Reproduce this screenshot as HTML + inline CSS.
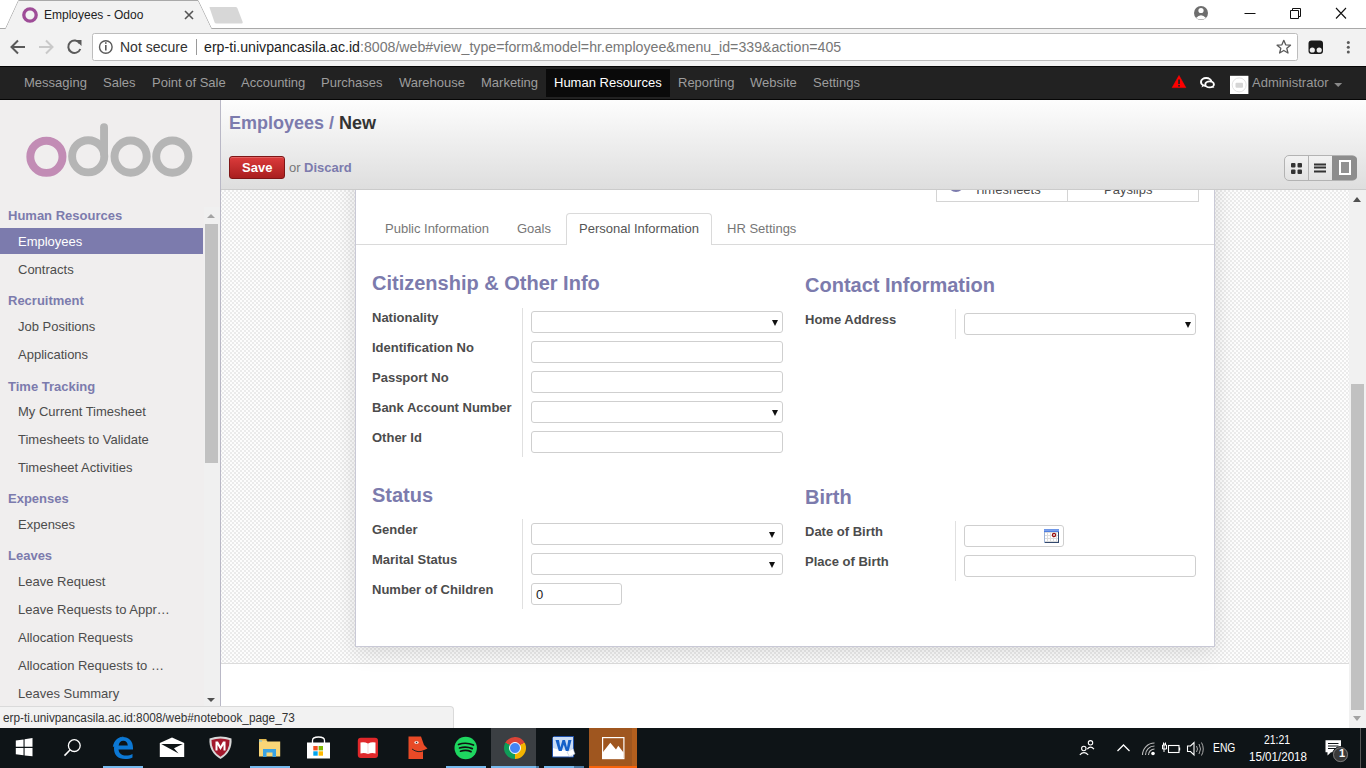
<!DOCTYPE html>
<html><head><meta charset="utf-8"><style>
*{margin:0;padding:0;box-sizing:border-box}
html,body{width:1366px;height:768px;overflow:hidden;background:#fff;font-family:"Liberation Sans",sans-serif;position:relative}
.a{position:absolute;white-space:nowrap}
.t{line-height:1}
</style></head><body>
<div class="a" style="left:0px;top:0px;width:1366px;height:66px;background:#fff"></div>
<svg class="a" style="left:0;top:0" width="1366" height="66">
<rect x="0" y="28" width="1366" height="38" fill="#f2f2f2"/>
<path d="M0 28.5 H5.7 L18.6 0.5 H198 L211.4 28.5 H1366" fill="none" stroke="#a9a9a9" stroke-width="1"/>
<path d="M5.7 29 L18.6 1 H198 L211.4 29 Z" fill="#f2f2f2"/>
<path d="M209.5 7.5 Q209 7 210.5 7 H235.5 Q236.8 7 237.3 8 L242.7 22 Q243 23.5 241.5 23.5 H216.5 Q215 23.5 214.6 22.5 Z" fill="#d7d7d7"/>
<circle cx="30" cy="15" r="6.2" fill="none" stroke="#9e4c97" stroke-width="3.3"/>
<path d="M185 11 L193 19 M193 11 L185 19" stroke="#555" stroke-width="1.6"/>
<!-- window controls -->
<circle cx="1201" cy="13" r="7" fill="#6e6e6e"/>
<circle cx="1201" cy="10.5" r="2.6" fill="#fff"/>
<path d="M1196 18 Q1201 12.5 1206 18 Q1201 21 1196 18Z" fill="#fff"/>
<path d="M1244.5 13.5 H1255.5" stroke="#111" stroke-width="1"/>
<path d="M1290.5 10.5 H1298.5 V18.5 H1290.5 Z M1292.5 10.5 V8.5 H1300.5 V16.5 H1298.5" fill="none" stroke="#111" stroke-width="1"/>
<path d="M1336 8 L1346 18.5 M1346 8 L1336 18.5" stroke="#111" stroke-width="1.1"/>
<!-- nav buttons -->
<path d="M11.5 47 H25 M18 40.5 L11.5 47 L18 53.5" fill="none" stroke="#5a5a5a" stroke-width="2"/>
<path d="M39 47 H52.5 M46 40.5 L52.5 47 L46 53.5" fill="none" stroke="#c9c9c9" stroke-width="2"/>
<path d="M79.8 43.5 A6.2 6.2 0 1 0 80.3 49" fill="none" stroke="#5a5a5a" stroke-width="2"/>
<path d="M75.5 40 H81.5 V46 Z" fill="#5a5a5a"/>
<!-- omnibox -->
<rect x="92.5" y="33.5" width="1205" height="27" rx="2" fill="#fff" stroke="#bdbdbd"/>
<circle cx="105.8" cy="47" r="6.3" fill="none" stroke="#5a5a5a" stroke-width="1.4"/>
<rect x="105" y="45" width="1.6" height="5.5" fill="#5a5a5a"/>
<rect x="105" y="42.2" width="1.6" height="1.6" fill="#5a5a5a"/>
<path d="M196.5 39 V55" stroke="#9a9a9a" stroke-width="1"/>
<path d="M1283.8 40.3 L1285.7 44.8 L1290.5 45.2 L1286.8 48.3 L1288 53 L1283.8 50.5 L1279.6 53 L1280.8 48.3 L1277.1 45.2 L1281.9 44.8 Z" fill="none" stroke="#5a5a5a" stroke-width="1.3" stroke-linejoin="round"/>
<!-- extension -->
<rect x="1308.5" y="40.5" width="14.5" height="13.5" rx="3" fill="#1a1a1a"/>
<circle cx="1312.3" cy="50" r="2.6" fill="#eee"/><circle cx="1319.2" cy="50" r="2.6" fill="#eee"/>
<g fill="#5a5a5a"><circle cx="1348.3" cy="42.4" r="1.5"/><circle cx="1348.3" cy="47.2" r="1.5"/><circle cx="1348.3" cy="52" r="1.5"/></g>
</svg>
<div class="a t" style="left:44px;top:9px;font-size:12px;color:#222;">Employees - Odoo</div>
<div class="a t" style="left:120px;top:40px;font-size:14px;color:#333;">Not secure</div>
<div class="a t" style="left:204px;top:40px;font-size:14px;color:#777;transform:scaleX(1.012);transform-origin:0 0"><span style="color:#222">erp-ti.univpancasila.ac.id</span>:8008/web#view_type=form&amp;model=hr.employee&amp;menu_id=339&amp;action=405</div>
<div class="a" style="left:0px;top:66px;width:1366px;height:34px;background:#222;border-top:1px solid #060606;border-bottom:1px solid #060606"></div>
<div class="a" style="left:546px;top:69px;width:124px;height:28px;background:#0a0a0a"></div>
<div class="a t" style="left:24px;top:76px;font-size:13px;color:#9d9d9d;">Messaging</div>
<div class="a t" style="left:103px;top:76px;font-size:13px;color:#9d9d9d;">Sales</div>
<div class="a t" style="left:152px;top:76px;font-size:13px;color:#9d9d9d;">Point of Sale</div>
<div class="a t" style="left:241px;top:76px;font-size:13px;color:#9d9d9d;">Accounting</div>
<div class="a t" style="left:321px;top:76px;font-size:13px;color:#9d9d9d;">Purchases</div>
<div class="a t" style="left:399px;top:76px;font-size:13px;color:#9d9d9d;">Warehouse</div>
<div class="a t" style="left:481px;top:76px;font-size:13px;color:#9d9d9d;">Marketing</div>
<div class="a t" style="left:554px;top:76px;font-size:13px;color:#fff;">Human Resources</div>
<div class="a t" style="left:678px;top:76px;font-size:13px;color:#9d9d9d;">Reporting</div>
<div class="a t" style="left:750px;top:76px;font-size:13px;color:#9d9d9d;">Website</div>
<div class="a t" style="left:813px;top:76px;font-size:13px;color:#9d9d9d;">Settings</div>
<svg class="a" style="left:1165px;top:70px" width="201" height="28">
<path d="M14 5.5 L20.8 17.6 H7.2 Z" fill="#f00" stroke="#f00" stroke-width="0.6" stroke-linejoin="round"/>
<rect x="13.2" y="9.5" width="1.7" height="4.5" fill="#222"/><rect x="13.2" y="15" width="1.7" height="1.6" fill="#222"/>
<ellipse cx="41.2" cy="12" rx="5.2" ry="3.9" fill="none" stroke="#fff" stroke-width="2"/>
<ellipse cx="44.6" cy="14.4" rx="4.3" ry="3" fill="#222" stroke="#fff" stroke-width="1.9"/>
<path d="M37.5 14.5 L36.5 17.5 L40 15.3" fill="#fff"/>
<path d="M47.5 16 L49.5 18 L45.5 17" fill="#fff"/>
<rect x="65" y="5.8" width="18.4" height="18.2" fill="#fff"/>
<circle cx="74.2" cy="14.9" r="7" fill="none" stroke="#e2e2e2" stroke-width="1"/>
<rect x="70.5" y="12.8" width="7.5" height="5" rx="1" fill="#d5d5d5"/>
<path d="M169.2 12.9 H177.2 L173.2 17.1 Z" fill="#8a8a8a"/>
</svg>
<div class="a t" style="left:1252px;top:76px;font-size:13px;color:#999;">Administrator</div>
<div class="a" style="left:0px;top:100px;width:221px;height:608px;background:#f0eeee;border-right:1px solid #b9b8c6"></div>
<svg class="a" style="left:0;top:100px" width="221" height="100">
<g fill="none" stroke-width="7.9">
<circle cx="46.4" cy="56.8" r="16.1" stroke="#c28cb5"/>
<circle cx="88.2" cy="56.3" r="16.1" stroke="#b5b5b5"/>
<circle cx="130.6" cy="56.6" r="16.1" stroke="#b5b5b5"/>
<circle cx="172.3" cy="56.6" r="16.1" stroke="#b5b5b5"/>
</g>
<rect x="100.1" y="23.2" width="7.9" height="34" rx="3.95" fill="#b5b5b5"/>
</svg>
<div class="a" style="left:204px;top:207px;width:16px;height:501px;background:#f0f0f0"></div>
<div class="a" style="left:205px;top:224px;width:13px;height:239px;background:#c1c1c1"></div>
<div class="a" style="left:207px;top:214px;width:0;height:0;border-left:4px solid transparent;border-right:4px solid transparent;border-bottom:4px solid #a3a3a3"></div>
<div class="a" style="left:207px;top:698px;width:0;height:0;border-left:4px solid transparent;border-right:4px solid transparent;border-top:4px solid #505050"></div>
<div class="a" style="left:0px;top:228px;width:203px;height:26px;background:#7c7bad"></div>
<div class="a t" style="left:8px;top:209px;font-size:13px;color:#7c7bad;font-weight:bold;">Human Resources</div>
<div class="a t" style="left:18px;top:235px;font-size:13px;color:#fff;">Employees</div>
<div class="a t" style="left:18px;top:263px;font-size:13px;color:#4c4c4c;">Contracts</div>
<div class="a t" style="left:8px;top:294px;font-size:13px;color:#7c7bad;font-weight:bold;">Recruitment</div>
<div class="a t" style="left:18px;top:320px;font-size:13px;color:#4c4c4c;">Job Positions</div>
<div class="a t" style="left:18px;top:348px;font-size:13px;color:#4c4c4c;">Applications</div>
<div class="a t" style="left:8px;top:380px;font-size:13px;color:#7c7bad;font-weight:bold;">Time Tracking</div>
<div class="a t" style="left:18px;top:405px;font-size:13px;color:#4c4c4c;">My Current Timesheet</div>
<div class="a t" style="left:18px;top:433px;font-size:13px;color:#4c4c4c;">Timesheets to Validate</div>
<div class="a t" style="left:18px;top:461px;font-size:13px;color:#4c4c4c;">Timesheet Activities</div>
<div class="a t" style="left:8px;top:492px;font-size:13px;color:#7c7bad;font-weight:bold;">Expenses</div>
<div class="a t" style="left:18px;top:518px;font-size:13px;color:#4c4c4c;">Expenses</div>
<div class="a t" style="left:8px;top:549px;font-size:13px;color:#7c7bad;font-weight:bold;">Leaves</div>
<div class="a t" style="left:18px;top:575px;font-size:13px;color:#4c4c4c;">Leave Request</div>
<div class="a t" style="left:18px;top:603px;font-size:13px;color:#4c4c4c;">Leave Requests to Appr&hellip;</div>
<div class="a t" style="left:18px;top:631px;font-size:13px;color:#4c4c4c;">Allocation Requests</div>
<div class="a t" style="left:18px;top:659px;font-size:13px;color:#4c4c4c;">Allocation Requests to &hellip;</div>
<div class="a t" style="left:18px;top:687px;font-size:13px;color:#4c4c4c;">Leaves Summary</div>
<div class="a" style="left:221px;top:100px;width:1145px;height:90px;background:linear-gradient(#fdfdfd,#dedede);border-bottom:1px solid #cbcbcb"></div>
<div class="a t" style="left:229px;top:114px;font-size:18px;font-weight:bold;color:#7c7bad">Employees <span style="color:#7c7bad">/</span> <span style="color:#333">New</span></div>
<div class="a" style="left:229px;top:156px;width:56px;height:23px;background:linear-gradient(#dc3b3b,#a91f1f);border:1px solid #7e1616;border-radius:3px;box-shadow:inset 0 1px 0 rgba(255,255,255,.2)"></div>
<div class="a t" style="left:242px;top:161px;font-size:13px;color:#fff;font-weight:bold;">Save</div>
<div class="a t" style="left:289px;top:161px;font-size:13px;color:#777;">or</div>
<div class="a t" style="left:304px;top:161px;font-size:13px;color:#7c7bad;font-weight:bold;">Discard</div>
<div class="a" style="left:1284px;top:155px;width:73px;height:26px;background:linear-gradient(#f2f2f2,#e2e2e2);border:1px solid #b3b3b3;border-radius:5px"></div>
<div class="a" style="left:1308px;top:156px;width:1px;height:24px;background:#b3b3b3"></div>
<div class="a" style="left:1332px;top:156px;width:25px;height:24px;background:#8d8d8d;border-radius:0 4px 4px 0"></div>
<svg class="a" style="left:1284px;top:155px" width="73" height="26">
<g fill="#333"><rect x="7" y="8" width="4.5" height="4.5" rx="1"/><rect x="13.5" y="8" width="4.5" height="4.5" rx="1"/><rect x="7" y="14.5" width="4.5" height="4.5" rx="1"/><rect x="13.5" y="14.5" width="4.5" height="4.5" rx="1"/>
<rect x="30" y="8.5" width="12" height="2"/><rect x="30" y="11.5" width="12" height="2"/><rect x="30" y="15.5" width="12" height="2"/></g>
<rect x="56" y="6" width="10" height="13" fill="#929292" stroke="#fff" stroke-width="2"/>
</svg>
<div class="a" style="left:221px;top:190px;width:1128px;height:473px;background:repeating-conic-gradient(#ebebeb 0 25%,#fdfdfd 0 50%) -1px -2px/4px 4px"></div>
<div class="a" style="left:221px;top:663px;width:1128px;height:45px;background:#fff;border-top:1px solid #dcdcdc"></div>
<div class="a" style="left:1349px;top:190px;width:17px;height:538px;background:#f1f1f1"></div>
<div class="a" style="left:1351px;top:384px;width:13px;height:326px;background:#c1c1c1"></div>
<div class="a" style="left:1353px;top:197px;width:0;height:0;border-left:4.5px solid transparent;border-right:4.5px solid transparent;border-bottom:5px solid #505050"></div>
<div class="a" style="left:1353px;top:716px;width:0;height:0;border-left:4.5px solid transparent;border-right:4.5px solid transparent;border-top:5px solid #a3a3a3"></div>
<div class="a" style="left:355px;top:150px;width:860px;height:497px;background:#fff;border:1px solid #c9c9d6;box-shadow:0 5px 20px rgba(0,0,0,.13);clip-path:inset(40px -40px -40px -40px)"></div>
<div class="a" style="left:221px;top:190px;width:1128px;height:20px;overflow:hidden"><div class="a" style="left:715px;top:-20px;width:263px;height:32px;border:1px solid #d4d4d4;border-top:none"></div><div class="a" style="left:846px;top:-20px;width:1px;height:31px;background:#d4d4d4"></div><div class="a" style="left:727px;top:-14px;width:16px;height:16px;border-radius:50%;background:#7c7bad"></div><div class="a t" style="left:753px;top:-7px;font-size:13px;color:#4c4c4c">Timesheets</div><div class="a t" style="left:883px;top:-7px;font-size:13px;color:#4c4c4c">Payslips</div></div>
<div class="a" style="left:356px;top:244px;width:858px;height:1px;background:#dadada"></div>
<div class="a" style="left:566px;top:213px;width:146px;height:32px;background:#fff;border:1px solid #dadada;border-bottom:none;border-radius:4px 4px 0 0"></div>
<div class="a t" style="left:385px;top:222px;font-size:13px;color:#777;">Public Information</div>
<div class="a t" style="left:517px;top:222px;font-size:13px;color:#777;">Goals</div>
<div class="a t" style="left:579px;top:222px;font-size:13px;color:#555;">Personal Information</div>
<div class="a t" style="left:727px;top:222px;font-size:13px;color:#777;">HR Settings</div>
<div class="a t" style="left:372px;top:273px;font-size:20px;color:#7c7bad;font-weight:bold;">Citizenship &amp; Other Info</div>
<div class="a" style="left:522px;top:308px;width:1px;height:149px;background:#e0e0e0"></div>
<div class="a t" style="left:372px;top:311px;font-size:13px;color:#4c4c4c;font-weight:bold;">Nationality</div>
<div class="a t" style="left:372px;top:341px;font-size:13px;color:#4c4c4c;font-weight:bold;">Identification No</div>
<div class="a t" style="left:372px;top:371px;font-size:13px;color:#4c4c4c;font-weight:bold;">Passport No</div>
<div class="a t" style="left:372px;top:401px;font-size:13px;color:#4c4c4c;font-weight:bold;">Bank Account Number</div>
<div class="a t" style="left:372px;top:431px;font-size:13px;color:#4c4c4c;font-weight:bold;">Other Id</div>
<div class="a" style="left:531px;top:311px;width:252px;height:22px;background:#fff;border:1px solid #cfcfcf;border-radius:3px"></div>
<div class="a" style="left:772px;top:320px;width:0;height:0;border-left:3.5px solid transparent;border-right:3.5px solid transparent;border-top:6px solid #111"></div>
<div class="a" style="left:531px;top:341px;width:252px;height:22px;background:#fff;border:1px solid #cfcfcf;border-radius:3px"></div>
<div class="a" style="left:531px;top:371px;width:252px;height:22px;background:#fff;border:1px solid #cfcfcf;border-radius:3px"></div>
<div class="a" style="left:531px;top:401px;width:252px;height:22px;background:#fff;border:1px solid #cfcfcf;border-radius:3px"></div>
<div class="a" style="left:772px;top:410px;width:0;height:0;border-left:3.5px solid transparent;border-right:3.5px solid transparent;border-top:6px solid #111"></div>
<div class="a" style="left:531px;top:431px;width:252px;height:22px;background:#fff;border:1px solid #cfcfcf;border-radius:3px"></div>
<div class="a t" style="left:805px;top:275px;font-size:20px;color:#7c7bad;font-weight:bold;">Contact Information</div>
<div class="a" style="left:955px;top:309px;width:1px;height:30px;background:#e0e0e0"></div>
<div class="a t" style="left:805px;top:313px;font-size:13px;color:#4c4c4c;font-weight:bold;">Home Address</div>
<div class="a" style="left:964px;top:313px;width:232px;height:22px;background:#fff;border:1px solid #cfcfcf;border-radius:3px"></div>
<div class="a" style="left:1185px;top:322px;width:0;height:0;border-left:3.5px solid transparent;border-right:3.5px solid transparent;border-top:6px solid #111"></div>
<div class="a t" style="left:372px;top:485px;font-size:20px;color:#7c7bad;font-weight:bold;">Status</div>
<div class="a" style="left:522px;top:519px;width:1px;height:90px;background:#e0e0e0"></div>
<div class="a t" style="left:372px;top:523px;font-size:13px;color:#4c4c4c;font-weight:bold;">Gender</div>
<div class="a t" style="left:372px;top:553px;font-size:13px;color:#4c4c4c;font-weight:bold;">Marital Status</div>
<div class="a t" style="left:372px;top:583px;font-size:13px;color:#4c4c4c;font-weight:bold;">Number of Children</div>
<div class="a" style="left:531px;top:523px;width:252px;height:22px;background:#fff;border:1px solid #cfcfcf;border-radius:3px"></div>
<div class="a" style="left:769px;top:532px;width:0;height:0;border-left:3.5px solid transparent;border-right:3.5px solid transparent;border-top:6px solid #111"></div>
<div class="a" style="left:531px;top:553px;width:252px;height:22px;background:#fff;border:1px solid #cfcfcf;border-radius:3px"></div>
<div class="a" style="left:769px;top:562px;width:0;height:0;border-left:3.5px solid transparent;border-right:3.5px solid transparent;border-top:6px solid #111"></div>
<div class="a" style="left:531px;top:583px;width:91px;height:22px;background:#fff;border:1px solid #cfcfcf;border-radius:3px"></div>
<div class="a t" style="left:536px;top:588px;font-size:13px;color:#222;">0</div>
<div class="a t" style="left:805px;top:487px;font-size:20px;color:#7c7bad;font-weight:bold;">Birth</div>
<div class="a" style="left:955px;top:521px;width:1px;height:60px;background:#e0e0e0"></div>
<div class="a t" style="left:805px;top:525px;font-size:13px;color:#4c4c4c;font-weight:bold;">Date of Birth</div>
<div class="a t" style="left:805px;top:555px;font-size:13px;color:#4c4c4c;font-weight:bold;">Place of Birth</div>
<div class="a" style="left:964px;top:525px;width:100px;height:22px;background:#fff;border:1px solid #cfcfcf;border-radius:3px"></div>
<svg class="a" style="left:1044px;top:529px" width="15" height="14">
<rect x="0" y="0" width="15" height="14" fill="#33496e"/>
<rect x="0" y="0" width="15" height="3" fill="#4f7ee0"/>
<rect x="0" y="0.5" width="15" height="1.2" fill="#8fb0f0"/>
<rect x="1" y="3" width="13" height="10" fill="#fff"/>
<rect x="0" y="3" width="1" height="11" fill="#9db3d6"/>
<g fill="#dcdcdc"><rect x="1" y="3" width="13" height="1"/><rect x="3" y="3" width="1" height="10"/><rect x="6" y="3" width="1" height="10"/><rect x="9" y="3" width="1" height="10"/><rect x="12" y="3" width="1" height="10"/><rect x="1" y="6" width="13" height="1"/><rect x="1" y="9" width="13" height="1"/><rect x="1" y="12" width="13" height="1"/></g>
<circle cx="10" cy="6" r="1.6" fill="none" stroke="#9a0e0e" stroke-width="1.2"/>
</svg>
<div class="a" style="left:964px;top:555px;width:232px;height:22px;background:#fff;border:1px solid #cfcfcf;border-radius:3px"></div>
<div class="a t" style="left:0;top:706px;width:454px;height:22px;background:#f2f2f2;border:1px solid #dadada;border-left:none;border-bottom:none;border-top-right-radius:4px"></div>
<div class="a t" style="left:3px;top:712px;font-size:12px;color:#333;transform:scaleX(0.983);transform-origin:0 0">erp-ti.univpancasila.ac.id:8008/web#notebook_page_73</div>
<div class="a" style="left:0px;top:728px;width:1366px;height:40px;background:#0e1417"></div>
<div class="a" style="left:491px;top:728px;width:45px;height:40px;background:#3b3f43"></div>
<div class="a" style="left:589px;top:728px;width:48px;height:40px;background:#9f561f"></div>
<div class="a" style="left:632px;top:728px;width:5px;height:40px;background:#b35f1e"></div>
<svg class="a" style="left:0;top:728px" width="1366" height="40">
<!-- windows logo -->
<path d="M15.8 12.5 L23.5 11.4 V18.8 H15.8 Z M24.6 11.2 L32.5 10 V18.8 H24.6 Z M15.8 19.9 H23.5 V27.3 L15.8 26.2 Z M24.6 19.9 H32.5 V28.3 L24.6 27.4 Z" fill="#fff"/>
<!-- search -->
<circle cx="74.3" cy="17.6" r="5.9" fill="none" stroke="#fff" stroke-width="1.3"/>
<path d="M70.2 21.8 L64.5 27.6" stroke="#fff" stroke-width="1.5"/>
<!-- edge -->
<path d="M122.8 9 C129 9 133 13 133 20 V21.5 H118.5 C119 25.5 122 27.5 126 27.5 C128.5 27.5 130.5 27 132.5 26 V29.5 C130.5 30.5 128 31 125 31 C118 31 114 27 114 20.5 C114 14 118 9.5 122.8 9 Z M118.6 17.6 H127.8 C127.6 14.5 126 12.8 123.3 12.8 C120.8 12.8 119 14.7 118.6 17.6 Z" fill="#0c78d4"/>
<path d="M112.8 19 C114 12 119 8.6 124 8.6 C118.5 10.5 116 14 115.4 18 Z" fill="#0c78d4"/>
<rect x="103" y="38" width="40" height="2" fill="#76b9ed"/>
<!-- mail -->
<path d="M159.8 15.1 L172 9.5 L184.2 15.1 V29.1 H159.8 Z" fill="#fff"/>
<path d="M161.2 15.9 H182.8 L174 20.3 L178.6 25.4 Z" fill="#0e1417"/>
<!-- mcafee -->
<path d="M209.5 10.5 Q220.5 6.5 231.5 10.5 Q232.5 24 220.5 31 Q208.5 24 209.5 10.5 Z" fill="#d8d8d8"/>
<path d="M211.5 12 Q220.5 9 229.5 12 Q230 23 220.5 28.7 Q211 23 211.5 12 Z" fill="#a3182c"/>
<path d="M215.5 22.5 V13.5 H218 L220.5 18 L223 13.5 H225.5 V22.5 H223.5 V17 L220.5 22 L217.5 17 V22.5 Z" fill="#fff"/>
<!-- explorer -->
<path d="M259 12 H266 L267.5 13.5 H280.2 V28.5 H259 Z" fill="#f9d677"/>
<path d="M259 11 H266 L267.5 12.5 H259Z" fill="#e0b84e"/>
<rect x="259" y="12.5" width="3" height="1" fill="#6cc4ee"/>
<path d="M263 29 V21 H276 V29 H272.5 V24.5 H266.5 V29 Z" fill="#3aa3e3"/>
<rect x="250" y="38" width="40" height="2" fill="#76b9ed"/>
<!-- store -->
<path d="M307 14.5 H330 V30.5 H307 Z" fill="#fff"/>
<path d="M312.5 15 V12.5 Q312.5 9 318.5 9 Q324.5 9 324.5 12.5 V15" fill="none" stroke="#fff" stroke-width="1.3"/>
<rect x="313.3" y="18" width="4.4" height="4.4" fill="#f25022"/><rect x="318.6" y="18" width="4.4" height="4.4" fill="#7fba00"/>
<rect x="313.3" y="23.3" width="4.4" height="4.4" fill="#00a4ef"/><rect x="318.6" y="23.3" width="4.4" height="4.4" fill="#ffb900"/>
<!-- red book -->
<rect x="357.8" y="9.8" width="20.2" height="20.2" rx="3" fill="#e0272a"/>
<path d="M360.5 14.5 Q364.5 13.5 367.9 15.5 V26 Q364.5 24.5 360.5 25.5 Z M375.5 14.5 Q371.5 13.5 368.1 15.5 V26 Q371.5 24.5 375.5 25.5 Z" fill="#fff"/>
<!-- red face -->
<path d="M408.5 8.5 H421 L424 17 L427.5 20.5 L423 22.5 V31 H408.5 Z" fill="#e84a27"/>
<ellipse cx="416.5" cy="14.5" rx="2.2" ry="1.2" fill="#fff"/><circle cx="416.5" cy="14.5" r="0.8" fill="#333"/>
<path d="M412 21 Q418 25.5 424 22.5" fill="none" stroke="#222" stroke-width="1"/>
<!-- spotify -->
<circle cx="465.7" cy="20" r="11.2" fill="#1ed760"/>
<path d="M458.5 16.5 Q466 13.8 473.5 17 M459.5 20 Q466 17.8 472.3 20.6 M460.5 23.2 Q466 21.5 471 23.6" fill="none" stroke="#111" stroke-width="1.7" stroke-linecap="round"/>
<rect x="446" y="38" width="40" height="2" fill="#76b9ed"/>
<!-- chrome -->
<rect x="491" y="38" width="45" height="2" fill="#76b9ed"/>
<rect x="536" y="38" width="3" height="2" fill="#4a7aa3"/>
<!-- word -->
<path d="M555 8.5 H573.5 V29 H552.5 V11 Q552.5 8.5 555 8.5 Z" fill="#fff" stroke="#1d4fa8" stroke-width="1"/>
<path d="M553 9 H573 V21 Q563 24 553 20 Z" fill="#c9dcf5"/>
<path d="M555.5 12 H559 L560.3 19.5 L562.5 12 H565 L567 19.5 L568.3 12 H571.5 L568.7 23 H565.8 L563.8 16.8 L561.7 23 H558.8 Z" fill="#1560c8"/>
<path d="M567 24 L573 20.5 L575 26 L569.5 28.5 Z" fill="#fff" stroke="#aab8cc" stroke-width="0.5"/>
<rect x="544" y="38" width="30" height="2" fill="#76b9ed"/>
<rect x="574" y="38" width="10" height="2" fill="#4a7aa3"/>
<!-- photos -->
<rect x="602.6" y="9.6" width="21.3" height="21" fill="none" stroke="#fff" stroke-width="1.2"/>
<path d="M603 24 L610.3 14.8 L616 21.5 L618.3 17.7 L623.5 24.5 V30.5 H603 Z" fill="#fff"/>
<rect x="589" y="38" width="48" height="2" fill="#f7630c"/>
<!-- tray -->
<circle cx="1090.5" cy="14.8" r="2.2" fill="none" stroke="#fff" stroke-width="1.1"/>
<path d="M1087.3 21.2 Q1090.5 17 1094 21.2" fill="none" stroke="#fff" stroke-width="1.1"/>
<circle cx="1083.8" cy="20.5" r="2.2" fill="none" stroke="#fff" stroke-width="1.1"/>
<path d="M1079.8 26.8 Q1084 22.5 1088.2 26.8" fill="none" stroke="#fff" stroke-width="1.1"/>
<path d="M1117.5 23 L1123.5 17 L1129.5 23" fill="none" stroke="#fff" stroke-width="1.3"/>
<path d="M1142.5 27 A12 12 0 0 1 1154.5 15 M1145.5 27 A9 9 0 0 1 1154.5 18 M1148.5 27 A6 6 0 0 1 1154.5 21" fill="none" stroke="#bbb" stroke-width="1.1"/>
<circle cx="1153" cy="25.5" r="1.8" fill="#fff"/>
<rect x="1168.5" y="17.5" width="10.5" height="7" fill="none" stroke="#fff" stroke-width="1.1"/>
<rect x="1179" y="19.5" width="1.2" height="3" fill="#fff"/>
<path d="M1164 15 V24 M1162.5 17 H1166.5 V21 H1162.5Z M1163.5 14.5 V17 M1165.5 14.5 V17" fill="none" stroke="#fff" stroke-width="1"/>
<path d="M1187.5 18 H1190.5 L1194 14.5 V27 L1190.5 23.5 H1187.5 Z" fill="none" stroke="#fff" stroke-width="1.1"/>
<path d="M1196.5 18 Q1198.5 21 1196.5 24 M1199 16 Q1202 21 1199 26 M1201.5 14.5 Q1205 21 1201.5 27.5" fill="none" stroke="#aaa" stroke-width="1"/>
<!-- notification -->
<path d="M1325.5 12.3 H1341 V24.2 H1331 L1327.5 27.5 V24.2 H1325.5 Z" fill="#fff"/>
<path d="M1328 15.5 H1338.5 M1328 18 H1338.5 M1328 20.5 H1336" stroke="#0e1417" stroke-width="1"/>
<circle cx="1340.5" cy="26.6" r="8" fill="#3a3a3a" stroke="#0e1417" stroke-width="1"/>
<circle cx="1340.5" cy="26.6" r="7" fill="none" stroke="#8a8a8a" stroke-width="0.8"/>
<rect x="1360" y="0" width="1" height="40" fill="#555"/>
</svg>
<div class="a" style="left:503.8px;top:737px;width:22px;height:22px;border-radius:50%;background:conic-gradient(from -60deg,#db4437 0 120deg,#f4b400 120deg 240deg,#0f9d58 240deg 360deg)"></div><div class="a" style="left:508.8px;top:742px;width:12px;height:12px;border-radius:50%;background:#4285f4;border:1.5px solid #fff"></div>
<div class="a t" style="left:1339px;top:748px;width:4px;font-size:11px;font-weight:bold;color:#fff;text-align:center">1</div>
<div class="a t" style="left:1213px;top:742px;font-size:12px;color:#fff;transform:scaleX(0.86);transform-origin:0 0">ENG</div>
<div class="a t" style="left:1264px;top:734px;font-size:12px;color:#fff;transform:scaleX(0.87);transform-origin:0 0">21:21</div>
<div class="a t" style="left:1249px;top:751px;font-size:12px;color:#fff;transform:scaleX(0.965);transform-origin:0 0">15/01/2018</div>
</body></html>
